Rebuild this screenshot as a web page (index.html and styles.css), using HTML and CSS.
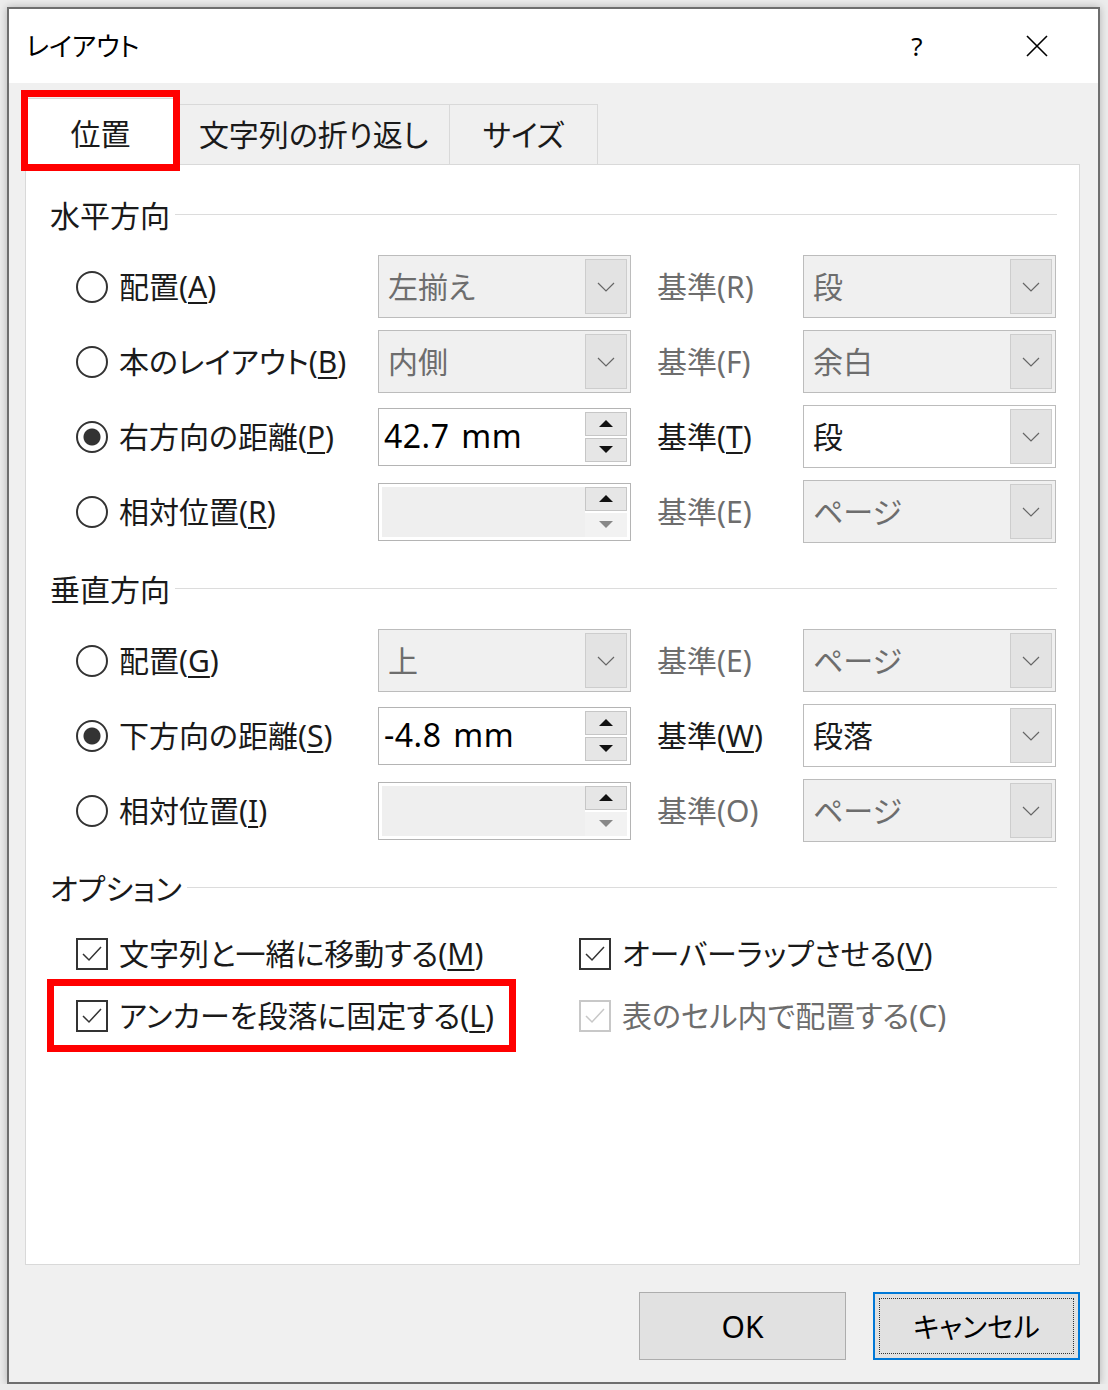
FILE: index.html
```html
<!DOCTYPE html>
<html lang="ja">
<head>
  <meta charset="UTF-8" />
  <title>レイアウト</title>
  <link rel="stylesheet" href="styles.css">
</head>
<body>

  <div class="window">
    <div class="titlebar">
      <div class="title">レイアウト</div>
      <div class="help">?</div>
      <div class="close">
        <svg width="22" height="22" viewBox="0 0 22 22"><path d="M1 1L21 21M21 1L1 21" stroke="#000" stroke-width="1.6" fill="none"/></svg>
      </div>
    </div>

    <div class="body">
      <!-- タブ -->
      <div class="tabs">
        <div class="tab active">位置<span class="mark mark-tab"></span></div>
        <div class="tab tab-wrap">文字列の折り返し</div>
        <div class="tab tab-size">サイズ</div>
      </div>

      <div class="panel">
        <!-- 水平方向 -->
        <div class="group-title">水平方向</div>
        <div class="grid">
          <label class="radio-item"><span class="radio"></span><span>配置(<u>A</u>)</span></label>
          <div class="select disabled"><span class="value">左揃え</span><span class="drop"><svg width="18" height="10" viewBox="0 0 18 10"><path d="M1 1l8 8 8-8" fill="none" stroke="#666" stroke-width="1.2"/></svg></span></div>
          <div class="ref disabled">基準(R)</div>
          <div class="select disabled"><span class="value">段</span><span class="drop"><svg width="18" height="10" viewBox="0 0 18 10"><path d="M1 1l8 8 8-8" fill="none" stroke="#666" stroke-width="1.2"/></svg></span></div>

          <label class="radio-item"><span class="radio"></span><span>本のレイアウト(<u>B</u>)</span></label>
          <div class="select disabled"><span class="value">内側</span><span class="drop"><svg width="18" height="10" viewBox="0 0 18 10"><path d="M1 1l8 8 8-8" fill="none" stroke="#666" stroke-width="1.2"/></svg></span></div>
          <div class="ref disabled">基準(F)</div>
          <div class="select disabled"><span class="value">余白</span><span class="drop"><svg width="18" height="10" viewBox="0 0 18 10"><path d="M1 1l8 8 8-8" fill="none" stroke="#666" stroke-width="1.2"/></svg></span></div>

          <label class="radio-item"><span class="radio checked"></span><span>右方向の距離(<u>P</u>)</span></label>
          <div class="spin">
            <span class="value">42.7 mm</span>
            <span class="spin-btns">
              <span class="btn"><svg width="14" height="7" viewBox="0 0 14 7"><path d="M7 0L14 7H0z" fill="#111"/></svg></span>
              <span class="btn"><svg width="14" height="7" viewBox="0 0 14 7"><path d="M0 0H14L7 7z" fill="#111"/></svg></span>
            </span>
          </div>
          <div class="ref">基準(<u>T</u>)</div>
          <div class="select"><span class="value">段</span><span class="drop"><svg width="18" height="10" viewBox="0 0 18 10"><path d="M1 1l8 8 8-8" fill="none" stroke="#666" stroke-width="1.2"/></svg></span></div>

          <label class="radio-item"><span class="radio"></span><span>相対位置(<u>R</u>)</span></label>
          <div class="spin disabled">
            <span class="value"></span>
            <span class="spin-btns">
              <span class="btn"><svg width="14" height="7" viewBox="0 0 14 7"><path d="M7 0L14 7H0z" fill="#111"/></svg></span>
              <span class="btn off"><svg width="14" height="7" viewBox="0 0 14 7"><path d="M0 0H14L7 7z" fill="#888"/></svg></span>
            </span>
          </div>
          <div class="ref disabled">基準(E)</div>
          <div class="select disabled"><span class="value">ページ</span><span class="drop"><svg width="18" height="10" viewBox="0 0 18 10"><path d="M1 1l8 8 8-8" fill="none" stroke="#666" stroke-width="1.2"/></svg></span></div>
        </div>

        <!-- 垂直方向 -->
        <div class="group-title">垂直方向</div>
        <div class="grid">
          <label class="radio-item"><span class="radio"></span><span>配置(<u>G</u>)</span></label>
          <div class="select disabled"><span class="value">上</span><span class="drop"><svg width="18" height="10" viewBox="0 0 18 10"><path d="M1 1l8 8 8-8" fill="none" stroke="#666" stroke-width="1.2"/></svg></span></div>
          <div class="ref disabled">基準(E)</div>
          <div class="select disabled"><span class="value">ページ</span><span class="drop"><svg width="18" height="10" viewBox="0 0 18 10"><path d="M1 1l8 8 8-8" fill="none" stroke="#666" stroke-width="1.2"/></svg></span></div>

          <label class="radio-item"><span class="radio checked"></span><span>下方向の距離(<u>S</u>)</span></label>
          <div class="spin">
            <span class="value">-4.8 mm</span>
            <span class="spin-btns">
              <span class="btn"><svg width="14" height="7" viewBox="0 0 14 7"><path d="M7 0L14 7H0z" fill="#111"/></svg></span>
              <span class="btn"><svg width="14" height="7" viewBox="0 0 14 7"><path d="M0 0H14L7 7z" fill="#111"/></svg></span>
            </span>
          </div>
          <div class="ref">基準(<u>W</u>)</div>
          <div class="select"><span class="value">段落</span><span class="drop"><svg width="18" height="10" viewBox="0 0 18 10"><path d="M1 1l8 8 8-8" fill="none" stroke="#666" stroke-width="1.2"/></svg></span></div>

          <label class="radio-item"><span class="radio"></span><span>相対位置(<u>I</u>)</span></label>
          <div class="spin disabled">
            <span class="value"></span>
            <span class="spin-btns">
              <span class="btn"><svg width="14" height="7" viewBox="0 0 14 7"><path d="M7 0L14 7H0z" fill="#111"/></svg></span>
              <span class="btn off"><svg width="14" height="7" viewBox="0 0 14 7"><path d="M0 0H14L7 7z" fill="#888"/></svg></span>
            </span>
          </div>
          <div class="ref disabled">基準(O)</div>
          <div class="select disabled"><span class="value">ページ</span><span class="drop"><svg width="18" height="10" viewBox="0 0 18 10"><path d="M1 1l8 8 8-8" fill="none" stroke="#666" stroke-width="1.2"/></svg></span></div>
        </div>

        <!-- オプション -->
        <div class="group-title">オプション</div>
        <div class="options">
          <label class="check-item"><span class="box"><svg width="28" height="28" viewBox="0 0 28 28"><path d="M5 14l6 6 12-13" fill="none" stroke="#333" stroke-width="1.5"/></svg></span><span>文字列と一緒に移動する(<u>M</u>)</span></label>
          <label class="check-item"><span class="box"><svg width="28" height="28" viewBox="0 0 28 28"><path d="M5 14l6 6 12-13" fill="none" stroke="#333" stroke-width="1.5"/></svg></span><span>オーバーラップさせる(<u>V</u>)</span></label>
          <label class="check-item"><span class="box"><svg width="28" height="28" viewBox="0 0 28 28"><path d="M5 14l6 6 12-13" fill="none" stroke="#333" stroke-width="1.5"/></svg></span><span>アンカーを段落に固定する(<u>L</u>)</span><span class="mark mark-anchor"></span></label>
          <label class="check-item disabled"><span class="box"><svg width="28" height="28" viewBox="0 0 28 28"><path d="M5 14l6 6 12-13" fill="none" stroke="#c8c8c8" stroke-width="1.5"/></svg></span><span>表のセル内で配置する(C)</span></label>
        </div>
      </div>

      <div class="buttons">
        <div class="button">OK</div>
        <div class="button focused">キャンセル</div>
      </div>
    </div>
  </div>

</body>
</html>
```

FILE: styles.css
```css
* {
  box-sizing: border-box;
}

body {
  margin: 0;
  background: #ececec;
  font-family: "Noto Sans", "Noto Sans CJK JP", sans-serif;
  font-feature-settings: "palt";
  color: #1a1a1a;
}

.window {
  margin: 7px 0 0 7px;
  width: 1093px;
  height: 1377px;
  border: 2px solid #6e6e6e;
  box-shadow: 0 0 8px rgba(0,0,0,0.25);
  background: #f0f0f0;
  display: flex;
  flex-direction: column;
}

/* タイトルバー */
.titlebar {
  height: 74px;
  background: white;
  display: flex;
  align-items: center;
  padding-left: 17px;
  flex: none;
}

.title {
  font-size: 26px;
  line-height: 40px;
  color: #000;
}

.help {
  margin-left: auto;
  width: 46px;
  margin-right: 74px;
  text-align: center;
  font-size: 26px;
  line-height: 40px;
  color: #000;
}

.close {
  width: 46px;
  margin-right: 38px;
  display: flex;
  justify-content: center;
}

.body {
  flex: 1;
  display: flex;
  flex-direction: column;
  padding: 0 18px 22px 16px;
}

/* タブ */
.tabs {
  display: flex;
  align-items: flex-end;
  height: 81px;
  margin-left: -2px;
}

.tab {
  height: 60px;
  border: 1px solid #d9d9d9;
  border-bottom: none;
  border-left: none;
  background: #f0f0f0;
  font-size: 30px;
  line-height: 60px;
  text-align: center;
  color: #1a1a1a;
}

.tab.active {
  position: relative;
  width: 155px;
  height: 67px;
  margin-bottom: -1px;
  background: white;
  border-left: 1px solid #d9d9d9;
  line-height: 70px;
  z-index: 1;
}

.tab-wrap {
  width: 272px;
}

.tab-size {
  width: 148px;
}

/* 赤枠 */
.mark {
  position: absolute;
  border: 7px solid #ff0000;
  pointer-events: none;
}

.mark-tab {
  left: -3px;
  top: -9px;
  width: 159px;
  height: 81px;
}

.mark-anchor {
  left: -29px;
  top: -6px;
  width: 469px;
  height: 73px;
}

/* パネル */
.panel {
  flex: 1;
  background: white;
  border: 1px solid #d9d9d9;
  padding: 31px 22px 0 24px;
}

.group-title {
  display: flex;
  align-items: center;
  height: 40px;
  font-size: 30px;
  line-height: 40px;
  color: #1a1a1a;
}

.group-title::after {
  content: "";
  flex: 1;
  height: 1px;
  background: #dcdcdc;
  margin-left: 5px;
  margin-top: -3px;
}

.grid {
  display: grid;
  grid-template-columns: 302px 253px 172px 253px;
  grid-auto-rows: 75px;
  align-items: center;
  margin: 13px 0 21px 26px;
}

.radio-item, .check-item {
  display: flex;
  align-items: center;
  gap: 11px;
  font-size: 30px;
  line-height: 40px;
  white-space: nowrap;
}

u {
  text-underline-offset: 4px;
  text-decoration-thickness: 2px;
}

.radio {
  flex: none;
  width: 32px;
  height: 32px;
  border: 2px solid #333;
  border-radius: 50%;
}

.radio.checked {
  background: radial-gradient(circle, #333 0 8px, transparent 9px);
}

.ref {
  padding-left: 26px;
  font-size: 30px;
  line-height: 40px;
  white-space: nowrap;
}

.disabled {
  color: #6d6d6d;
}

/* コンボボックス */
.select {
  height: 63px;
  border: 1px solid #bcbcbc;
  background: white;
  display: flex;
}

.select.disabled {
  background: #f0f0f0;
}

.select .value {
  flex: 1;
  padding-left: 9px;
  font-size: 30px;
  line-height: 61px;
}

.drop {
  width: 42px;
  margin: 3px 3px 3px 0;
  background: #e3e3e3;
  border: 1px solid #cdcdcd;
  display: flex;
  align-items: center;
  justify-content: center;
}

/* スピンボックス */
.spin {
  height: 58px;
  border: 1px solid #b4b4b4;
  background: white;
  display: flex;
}

.spin .value {
  flex: 1;
  padding-left: 5px;
  font-size: 32px;
  letter-spacing: 0.5px;
  word-spacing: 3px;
  line-height: 54px;
  color: #000;
}

.spin.disabled .value {
  margin: 3px 0 3px 3px;
  background: #efefef;
}

.spin-btns {
  width: 42px;
  margin: 3px 3px 3px 0;
  display: flex;
  flex-direction: column;
  gap: 2px;
}

.spin-btns .btn {
  flex: 1;
  background: #e6e6e6;
  border: 1px solid #c6c6c6;
  display: flex;
  align-items: center;
  justify-content: center;
}

.spin-btns .btn.off {
  background: #f2f2f2;
  border-color: #f2f2f2;
}

/* オプション */
.options {
  display: grid;
  grid-template-columns: 503px 1fr;
  grid-auto-rows: 62px;
  margin: 14px 0 0 26px;
}

.check-item {
  position: relative;
}

.box {
  flex: none;
  width: 32px;
  height: 32px;
  border: 2px solid #333;
  display: flex;
}

.check-item.disabled .box {
  border-color: #c8c8c8;
}

/* ボタン */
.buttons {
  display: flex;
  justify-content: flex-end;
  gap: 27px;
  padding-top: 27px;
  flex: none;
}

.button {
  width: 207px;
  height: 68px;
  background: #e1e1e1;
  border: 1px solid #adadad;
  font-size: 30px;
  line-height: 68px;
  text-align: center;
  color: #000;
}

.button.focused {
  border: 2px solid #0078d7;
  font-size: 28px;
  line-height: 66px;
  outline: 1px dotted #333;
  outline-offset: -7px;
}
```
